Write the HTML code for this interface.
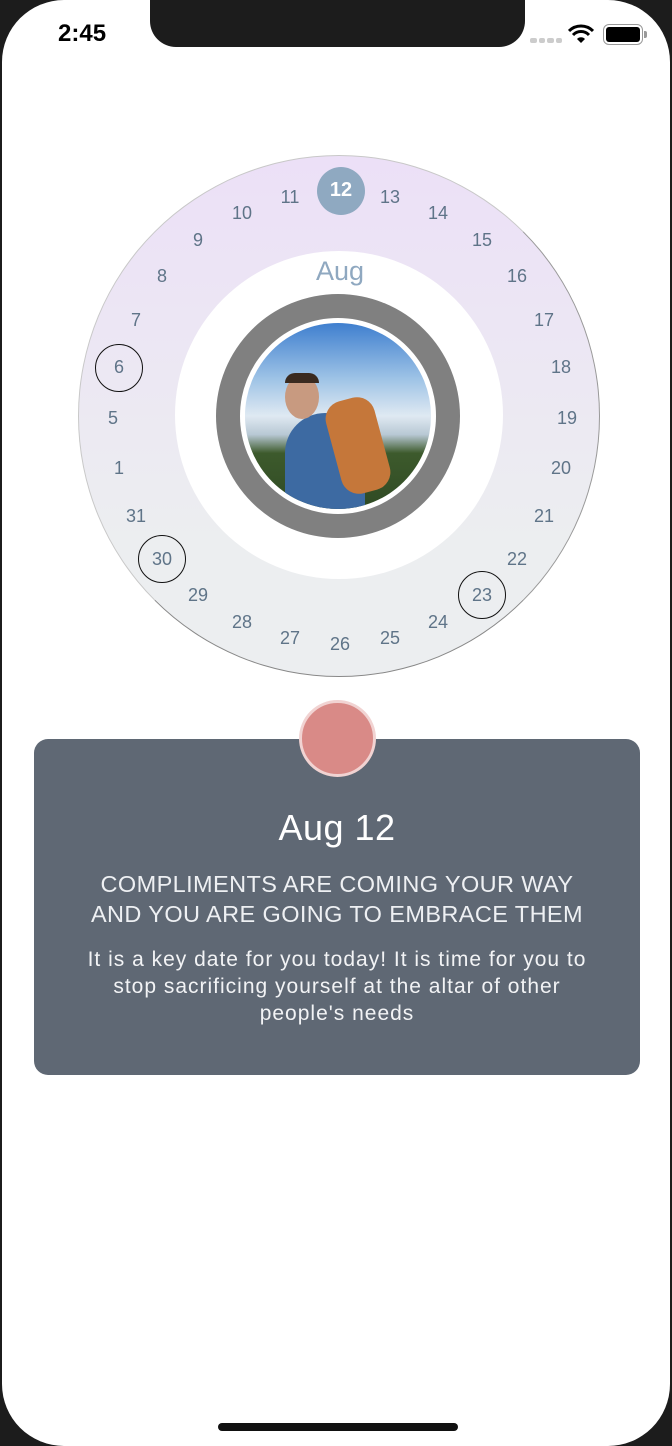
<!DOCTYPE html>
<html><head><meta charset="utf-8"><style>
*{margin:0;padding:0;box-sizing:border-box}
body{width:672px;height:1446px;background:#1c1c1c;position:relative;overflow:hidden;font-family:"Liberation Sans",sans-serif}
.screen{position:absolute;left:2px;top:0;width:668px;height:1446px;background:#fff;border-radius:62px}
.notch{position:absolute;left:150px;top:0;width:375px;height:47px;background:#1c1c1c;border-radius:0 0 26px 26px}
.time{position:absolute;left:58px;top:20px;font-size:24px;font-weight:bold;color:#000}
.n{position:absolute;width:40px;height:24px;margin-left:-20px;margin-top:-12px;text-align:center;font-size:18px;line-height:24px;color:#5f7488}
.c{position:absolute;width:48px;height:48px;margin-left:-24px;margin-top:-24px;border:1.5px solid #111;border-radius:50%}
.card{position:absolute;left:34px;top:739px;width:606px;height:336px;background:#5f6874;border-radius:14px;color:#fff;text-align:center}
</style></head><body>
<div class="screen"></div>
<div class="notch"></div>
<div class="time">2:45</div>
<div style="position:absolute;left:530px;top:38px;width:32px;height:5px;display:flex;gap:2px"><i style="flex:1;background:#ccc;border-radius:2px"></i><i style="flex:1;background:#ccc;border-radius:2px"></i><i style="flex:1;background:#ccc;border-radius:2px"></i><i style="flex:1;background:#ccc;border-radius:2px"></i></div>
<svg style="position:absolute;left:568px;top:24px" width="26" height="20" viewBox="0 0 26 20"><path d="M1 7 A17 17 0 0 1 25 7" stroke="#000" stroke-width="3" fill="none"/><path d="M5 11 A11 11 0 0 1 21 11" stroke="#000" stroke-width="3" fill="none"/><path d="M9 15 A5.5 5.5 0 0 1 17 15 L13 19Z" fill="#000"/></svg>
<div style="position:absolute;left:603px;top:24px;width:40px;height:21px;border:1.5px solid #999;border-radius:6px;padding:2px"><div style="width:100%;height:100%;background:#000;border-radius:3px"></div></div>
<div style="position:absolute;left:644px;top:31px;width:3px;height:7px;background:#999;border-radius:0 2px 2px 0"></div>

<div style="position:absolute;left:78px;top:155px;width:522px;height:522px;border-radius:50%;background:linear-gradient(#ece0f7,#eceef0 75%);border:1px solid #c8c8c8;border-bottom-color:#888;border-right-color:#999"></div>
<div style="position:absolute;left:175px;top:251px;width:328px;height:328px;border-radius:50%;background:#fff"></div>
<div style="position:absolute;left:305px;top:256px;width:70px;text-align:center;font-size:27px;color:#8fa8c0">Aug</div>
<div style="position:absolute;left:216px;top:294px;width:244px;height:244px;border-radius:50%;background:#808080"></div>
<div style="position:absolute;left:240px;top:318px;width:196px;height:196px;border-radius:50%;background:#fff"></div>
<div style="position:absolute;left:245px;top:323px;width:186px;height:186px;border-radius:50%;overflow:hidden;background:linear-gradient(#3f7fcf 0%,#9ec3e6 30%,#dfe9f2 50%,#b8c8d4 60%,#3d5a2c 70%,#2f4a24 100%)">
<div style="position:absolute;left:40px;top:90px;width:80px;height:120px;background:#3d6aa2;border-radius:40px 40px 0 0"></div>
<div style="position:absolute;left:40px;top:52px;width:34px;height:44px;background:#c89a80;border-radius:50%"></div>
<div style="position:absolute;left:40px;top:50px;width:34px;height:10px;background:#3a2a20;border-radius:10px 10px 0 0"></div>
<div style="position:absolute;left:88px;top:75px;width:50px;height:95px;background:#c5773a;border-radius:18px;transform:rotate(-15deg)"></div>
</div>

<div style="position:absolute;left:317px;top:167px;width:48px;height:48px;border-radius:50%;background:#8fa9c1"></div>
<div class="n" style="left:341px;top:190px;color:#fff;font-weight:bold;font-size:20px">12</div>
<div class="c" style="left:119px;top:368px"></div>
<div class="c" style="left:162px;top:559px"></div>
<div class="c" style="left:482px;top:595px"></div>
<div class="n" style="left:390px;top:197px">13</div>
<div class="n" style="left:438px;top:213px">14</div>
<div class="n" style="left:482px;top:240px">15</div>
<div class="n" style="left:517px;top:276px">16</div>
<div class="n" style="left:544px;top:320px">17</div>
<div class="n" style="left:561px;top:367px">18</div>
<div class="n" style="left:567px;top:418px">19</div>
<div class="n" style="left:561px;top:468px">20</div>
<div class="n" style="left:544px;top:516px">21</div>
<div class="n" style="left:517px;top:559px">22</div>
<div class="n" style="left:482px;top:595px">23</div>
<div class="n" style="left:438px;top:622px">24</div>
<div class="n" style="left:390px;top:638px">25</div>
<div class="n" style="left:340px;top:644px">26</div>
<div class="n" style="left:290px;top:638px">27</div>
<div class="n" style="left:242px;top:622px">28</div>
<div class="n" style="left:198px;top:595px">29</div>
<div class="n" style="left:162px;top:559px">30</div>
<div class="n" style="left:136px;top:516px">31</div>
<div class="n" style="left:119px;top:468px">1</div>
<div class="n" style="left:113px;top:418px">5</div>
<div class="n" style="left:119px;top:367px">6</div>
<div class="n" style="left:136px;top:320px">7</div>
<div class="n" style="left:162px;top:276px">8</div>
<div class="n" style="left:198px;top:240px">9</div>
<div class="n" style="left:242px;top:213px">10</div>
<div class="n" style="left:290px;top:197px">11</div>

<div class="card">
<div style="position:absolute;top:68px;width:100%;font-size:36px;letter-spacing:0.5px">Aug 12</div>
<div style="position:absolute;top:130px;width:100%;font-size:23.5px;letter-spacing:0.4px;line-height:30px;color:#eef0f3">COMPLIMENTS ARE COMING YOUR WAY<br>AND YOU ARE GOING TO EMBRACE THEM</div>
<div style="position:absolute;top:207px;width:100%;font-size:21px;letter-spacing:1px;line-height:27px;color:#f2f3f5">It is a key date for you today! It is time for you to<br>stop sacrificing yourself at the altar of other<br>people's needs</div>
</div>
<div style="position:absolute;left:299px;top:700px;width:77px;height:77px;border-radius:50%;background:#d98a87;border:3px solid #f1d3d2"></div>
<div style="position:absolute;left:218px;top:1423px;width:240px;height:8px;border-radius:4px;background:#111"></div>
</body></html>
